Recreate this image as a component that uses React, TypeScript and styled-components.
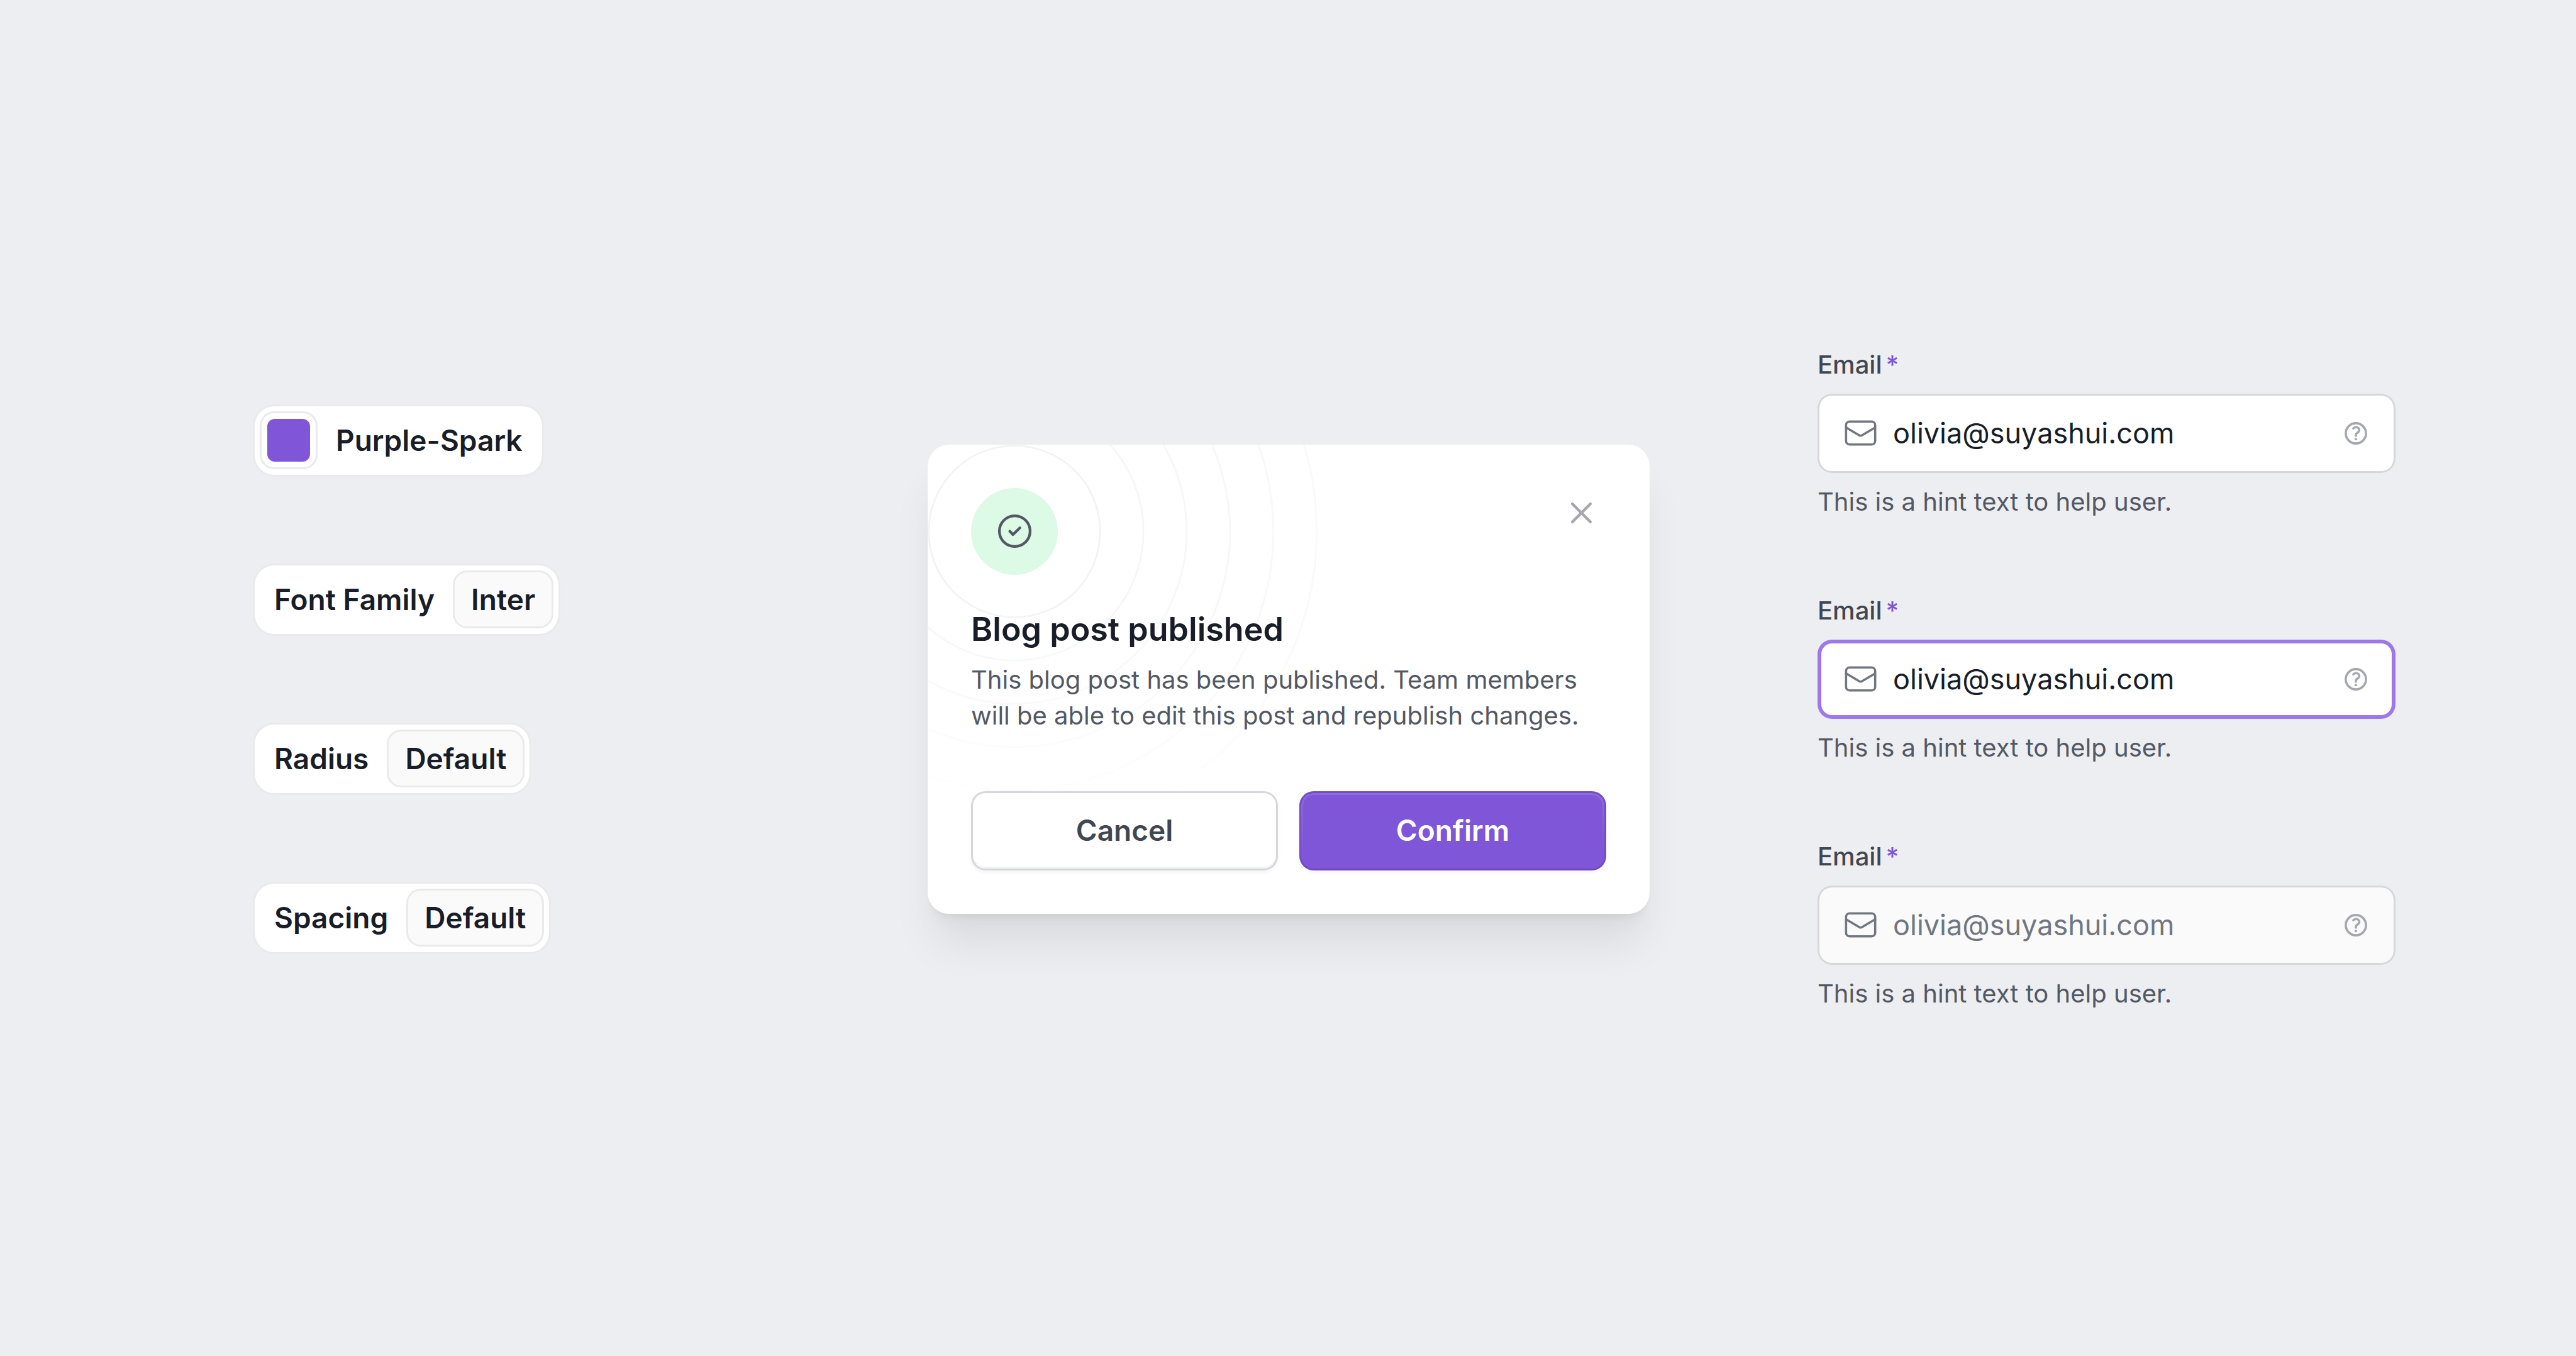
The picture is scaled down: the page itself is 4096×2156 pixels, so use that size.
import React, { useId } from "react";
import styled, { createGlobalStyle, css } from "styled-components";

const color = {
  page: "#edeef2",
  ink: "#181d27",
  strong: "#414651",
  body: "#535862",
  muted: "#717680",
  faint: "#a4a7ae",
  line: "#d5d7da",
  hairline: "#e9eaeb",
  soft: "#fafafa",
  brand: "#8056d8",
  ring: "#9e77ed",
  success: "#dcfae6",
};

const GlobalStyle = createGlobalStyle`
  *, *::before, *::after { box-sizing: border-box; }
  body {
    margin: 0;
    background: ${color.page};
    color: ${color.ink};
    font-family: Inter, "Liberation Sans", sans-serif;
  }
  button, input { font-family: inherit; }
  h2, p { margin: 0; }
`;

const Page = styled.main`
  display: flex;
  align-items: center;
  gap: 267px;
  min-height: 100vh;
  padding: 3px 287px 0 402px;
`;

const Tokens = styled.ul`
  flex: 1;
  display: flex;
  flex-direction: column;
  align-items: flex-start;
  gap: 138px;
  margin: 0;
  padding: 0;
  list-style: none;
`;

const Token = styled.li<{ $swatch?: boolean }>`
  display: flex;
  align-items: center;
  gap: 29px;
  height: 115px;
  padding: ${(p) => (p.$swatch ? "0 31px 0 8px" : "0 8px 0 31px")};
  border: 3px solid ${color.hairline};
  border-radius: 34px;
  background: #fff;
  background-clip: padding-box;
  font-size: 46px;
  line-height: 69px;
  font-weight: 600;
  white-space: nowrap;
`;

const TokenValue = styled.span`
  display: flex;
  align-items: center;
  height: 92px;
  padding: 0 26px;
  border: 3px solid ${color.hairline};
  border-radius: 23px;
  background: ${color.soft};
`;

const Swatch = styled.span`
  display: flex;
  width: 92px;
  height: 92px;
  padding: 9px;
  border: 3px solid ${color.hairline};
  border-radius: 23px;

  &::before {
    content: "";
    flex: 1;
    border-radius: 12px;
    background: ${color.brand};
  }
`;

const Dialog = styled.section`
  position: relative;
  width: 1148px;
  padding: 69px;
  border-radius: 34px;
  background: #fff;
  box-shadow:
    0 57px 69px -11px rgba(10, 13, 18, 0.08),
    0 23px 23px -11px rgba(10, 13, 18, 0.03),
    0 9px 9px -4px rgba(10, 13, 18, 0.04);
`;

const RingsClip = styled.div`
  position: absolute;
  inset: 0;
  overflow: hidden;
  border-radius: inherit;
  pointer-events: none;
`;

const Rings = styled.svg`
  position: absolute;
  top: -344px;
  left: -344px;
  width: 964px;
  height: 964px;
`;

const DialogContent = styled.div`
  position: relative;
  display: flex;
  flex-direction: column;
`;

const StatusIcon = styled.div`
  display: grid;
  place-items: center;
  width: 138px;
  height: 138px;
  margin-bottom: 46px;
  border-radius: 50%;
  background: ${color.success};

  svg { width: 69px; height: 69px; }
`;

const Title = styled.h2`
  margin-bottom: 10px;
  font-size: 52px;
  line-height: 82px;
  font-weight: 600;
`;

const Description = styled.p`
  margin-bottom: 92px;
  color: ${color.body};
  font-size: 40px;
  line-height: 57px;
`;

const Actions = styled.div`
  display: grid;
  grid-template-columns: 1fr 1fr;
  gap: 34px;
`;

const Button = styled.button<{ $primary?: boolean }>`
  position: relative;
  height: 126px;
  padding: 0;
  border-radius: 23px;
  font-size: 46px;
  line-height: 69px;
  font-weight: 600;
  cursor: pointer;
  ${(p) =>
    p.$primary
      ? css`
          border: 0;
          background: ${color.brand};
          color: #fff;
          box-shadow:
            inset 0 0 0 3px rgba(10, 13, 18, 0.1),
            inset 0 -3px 0 rgba(10, 13, 18, 0.05),
            0 3px 6px rgba(10, 13, 18, 0.05);

          &::before {
            content: "";
            position: absolute;
            inset: 3px;
            border: 3px solid rgba(255, 255, 255, 0.12);
            border-radius: 20px;
            mask-image: linear-gradient(#000, transparent 80%);
          }
        `
      : css`
          border: 3px solid ${color.line};
          background: #fff;
          color: ${color.strong};
          box-shadow:
            inset 0 -3px 0 rgba(10, 13, 18, 0.05),
            0 3px 6px rgba(10, 13, 18, 0.05);
        `}
`;

const CloseButton = styled.button`
  position: absolute;
  top: 46px;
  right: 46px;
  display: grid;
  place-items: center;
  width: 126px;
  height: 126px;
  padding: 0;
  border: 0;
  background: none;
  color: ${color.faint};
  cursor: pointer;

  svg { width: 69px; height: 69px; }
`;

const Fields = styled.form`
  display: flex;
  flex-direction: column;
  gap: 115px;
  width: 919px;
`;

const Field = styled.div`
  display: flex;
  flex-direction: column;
  gap: 17px;
`;

const Label = styled.label`
  display: flex;
  gap: 6px;
  color: ${color.strong};
  font-size: 40px;
  line-height: 58px;
  font-weight: 500;
`;

const Required = styled.span`
  color: ${color.brand};
`;

type FieldState = "default" | "focused" | "disabled";

const Control = styled.div<{ $state: FieldState }>`
  display: flex;
  align-items: center;
  gap: 23px;
  height: 126px;
  padding: 0 40px;
  border-radius: 23px;
  background: ${(p) => (p.$state === "disabled" ? color.soft : "#fff")};
  box-shadow: inset 0 0 0
    ${(p) => (p.$state === "focused" ? `6px ${color.ring}` : `3px ${color.line}`)};
`;

const MailIcon = styled.svg`
  flex: none;
  width: 57px;
  height: 57px;
  color: ${color.muted};
`;

const HelpIcon = styled.svg`
  flex: none;
  width: 46px;
  height: 46px;
  color: ${color.faint};
`;

const Input = styled.input`
  flex: 1;
  min-width: 0;
  height: 69px;
  padding: 0;
  border: 0;
  outline: 0;
  background: transparent;
  color: ${color.ink};
  font-size: 45px;
  line-height: 69px;

  &:disabled {
    color: ${color.muted};
    opacity: 1;
  }
`;

const Hint = styled.p`
  color: ${color.body};
  font-size: 40px;
  line-height: 58px;
`;

const rings = [
  { r: 47.5, opacity: 0.55 },
  { r: 71.5, opacity: 0.45 },
  { r: 95.5, opacity: 0.4 },
  { r: 119.5, opacity: 0.36 },
  { r: 143.5, opacity: 0.32 },
  { r: 167.5, opacity: 0.28 },
];

function EmailField({ state }: { state: FieldState }) {
  const id = useId();
  return (
    <Field>
      <Label htmlFor={id}>
        Email<Required>*</Required>
      </Label>
      <Control $state={state}>
        <MailIcon viewBox="0 0 20 20" fill="none" stroke="currentColor" strokeWidth="1.25" strokeLinecap="round" strokeLinejoin="round" aria-hidden="true">
          <rect x="1.875" y="3.625" width="16.25" height="12.75" rx="1.9" />
          <path d="M1.9 6.9 9.3 11.3a1.4 1.4 0 0 0 1.4 0L18.1 6.9" />
        </MailIcon>
        <Input
          id={id}
          type="email"
          defaultValue="olivia@suyashui.com"
          disabled={state === "disabled"}
          aria-describedby={`${id}-hint`}
        />
        <HelpIcon viewBox="0 0 16 16" fill="none" stroke="currentColor" strokeWidth="1.25" strokeLinecap="round" strokeLinejoin="round" aria-hidden="true">
          <circle cx="8" cy="8" r="5.6" />
          <path d="M6.6 5.3C7 4.8 7.5 4.6 8.1 4.6c1 0 1.8.75 1.8 1.7C9.9 7.6 8 7.6 8 8.9v.5" />
          <circle cx="8" cy="11.25" r=".7" fill="currentColor" stroke="none" />
        </HelpIcon>
      </Control>
      <Hint id={`${id}-hint`}>This is a hint text to help user.</Hint>
    </Field>
  );
}

export default function App() {
  return (
    <>
      <GlobalStyle />
      <Page>
        <Tokens>
          <Token $swatch>
            <Swatch />
            Purple-Spark
          </Token>
          <Token>
            Font Family<TokenValue>Inter</TokenValue>
          </Token>
          <Token>
            Radius<TokenValue>Default</TokenValue>
          </Token>
          <Token>
            Spacing<TokenValue>Default</TokenValue>
          </Token>
        </Tokens>

        <Dialog role="dialog" aria-labelledby="dialog-title" aria-describedby="dialog-text">
          <RingsClip>
            <Rings viewBox="0 0 336 336" fill="none" stroke={color.hairline} aria-hidden="true">
              <defs>
                <linearGradient id="ring-fade" x1="0" y1="0" x2="0" y2="1">
                  <stop offset="0.62" stopColor="#fff" />
                  <stop offset="1" stopColor="#fff" stopOpacity="0" />
                </linearGradient>
                <mask id="ring-mask">
                  <rect width="336" height="336" fill="url(#ring-fade)" />
                </mask>
              </defs>
              <g mask="url(#ring-mask)">
                {rings.map((ring) => (
                  <circle key={ring.r} cx="168" cy="168" r={ring.r} opacity={ring.opacity} />
                ))}
              </g>
            </Rings>
          </RingsClip>
          <DialogContent>
            <StatusIcon>
              <svg viewBox="0 0 24 24" fill="none" stroke={color.body} strokeWidth="1.5" strokeLinecap="round" strokeLinejoin="round" aria-hidden="true">
                <circle cx="12" cy="12" r="8.5" />
                <path d="M9.25 12 11 13.9l3.85-3.75" />
              </svg>
            </StatusIcon>
            <Title id="dialog-title">Blog post published</Title>
            <Description id="dialog-text">
              This blog post has been published. Team members will be able to edit this post and republish changes.
            </Description>
            <Actions>
              <Button type="button">Cancel</Button>
              <Button type="button" $primary>
                Confirm
              </Button>
            </Actions>
          </DialogContent>
          <CloseButton type="button" aria-label="Close">
            <svg viewBox="0 0 24 24" fill="none" stroke="currentColor" strokeWidth="1.5" strokeLinecap="round" aria-hidden="true">
              <path d="M7 7l10 10M17 7 7 17" />
            </svg>
          </CloseButton>
        </Dialog>

        <Fields>
          <EmailField state="default" />
          <EmailField state="focused" />
          <EmailField state="disabled" />
        </Fields>
      </Page>
    </>
  );
}
